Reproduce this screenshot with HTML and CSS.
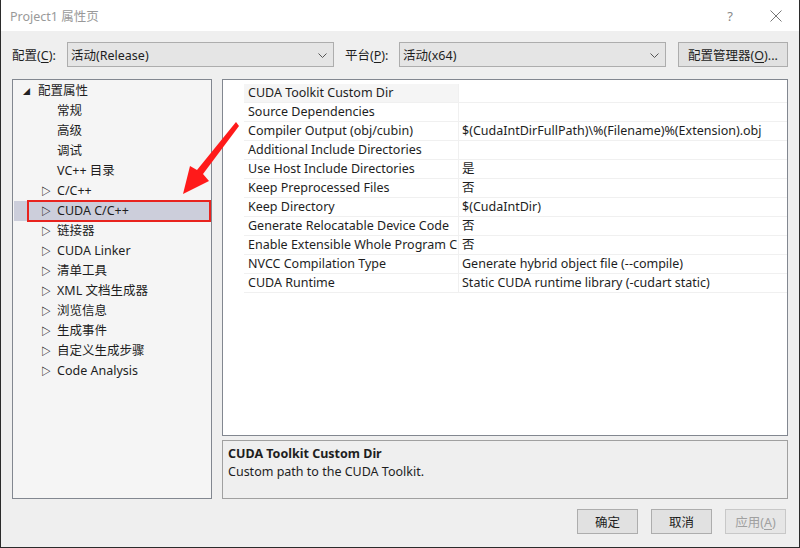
FILE: index.html
```html
<!DOCTYPE html>
<html>
<head>
    <title>Project1 属性页</title>
    <link rel="stylesheet" href="styles.css">
</head>
<body>
<div class="window">
    <div class="titlebar">
        <span class="title">Project1 属性页</span>
        <span class="tb-btn help">?</span>
        <span class="tb-btn close">
            <svg width="12" height="12" viewBox="0 0 12 12"><path d="M0.5 0.5L11.5 11.5M11.5 0.5L0.5 11.5" stroke="#777" stroke-width="1" fill="none"/></svg>
        </span>
    </div>

    <div class="content">
        <div class="toolbar">
            <label class="tlabel">配置(<u>C</u>):</label>
            <div class="select sel-config">
                <span>活动(Release)</span>
                <svg class="chev" width="9" height="5" viewBox="0 0 9 5"><path d="M0.5 0.5L4.5 4.5L8.5 0.5" stroke="#555" fill="none"/></svg>
            </div>
            <label class="tlabel plat">平台(<u>P</u>):</label>
            <div class="select sel-platform">
                <span>活动(x64)</span>
                <svg class="chev" width="9" height="5" viewBox="0 0 9 5"><path d="M0.5 0.5L4.5 4.5L8.5 0.5" stroke="#555" fill="none"/></svg>
            </div>
            <button class="btn mgr">配置管理器(<u>O</u>)...</button>
        </div>

        <div class="main">
            <div class="tree">
                <div class="node root"><span class="exp">&#9698;</span>配置属性</div>
                <div class="node leaf">常规</div>
                <div class="node leaf">高级</div>
                <div class="node leaf">调试</div>
                <div class="node leaf">VC++ 目录</div>
                <div class="node"><span class="tri">&#9655;</span>C/C++</div>
                <div class="node selected"><span class="tri">&#9655;</span>CUDA C/C++<span class="mark"></span></div>
                <div class="node"><span class="tri">&#9655;</span>链接器</div>
                <div class="node"><span class="tri">&#9655;</span>CUDA Linker</div>
                <div class="node"><span class="tri">&#9655;</span>清单工具</div>
                <div class="node"><span class="tri">&#9655;</span>XML 文档生成器</div>
                <div class="node"><span class="tri">&#9655;</span>浏览信息</div>
                <div class="node"><span class="tri">&#9655;</span>生成事件</div>
                <div class="node"><span class="tri">&#9655;</span>自定义生成步骤</div>
                <div class="node"><span class="tri">&#9655;</span>Code Analysis</div>
            </div>

            <div class="right">
                <div class="grid">
                    <div class="row current"><div class="name">CUDA Toolkit Custom Dir</div><div class="value"></div></div>
                    <div class="row"><div class="name">Source Dependencies</div><div class="value"></div></div>
                    <div class="row"><div class="name">Compiler Output (obj/cubin)</div><div class="value">$(CudaIntDirFullPath)\%(Filename)%(Extension).obj</div></div>
                    <div class="row"><div class="name">Additional Include Directories</div><div class="value"></div></div>
                    <div class="row"><div class="name">Use Host Include Directories</div><div class="value">是</div></div>
                    <div class="row"><div class="name">Keep Preprocessed Files</div><div class="value">否</div></div>
                    <div class="row"><div class="name">Keep Directory</div><div class="value">$(CudaIntDir)</div></div>
                    <div class="row"><div class="name">Generate Relocatable Device Code</div><div class="value">否</div></div>
                    <div class="row"><div class="name">Enable Extensible Whole Program C</div><div class="value">否</div></div>
                    <div class="row"><div class="name">NVCC Compilation Type</div><div class="value">Generate hybrid object file (--compile)</div></div>
                    <div class="row"><div class="name">CUDA Runtime</div><div class="value">Static CUDA runtime library (-cudart static)</div></div>
                </div>
                <div class="desc">
                    <div class="desc-title">CUDA Toolkit Custom Dir</div>
                    <div class="desc-text">Custom path to the CUDA Toolkit.</div>
                </div>
            </div>
        </div>

        <div class="footer">
            <button class="btn">确定</button>
            <button class="btn">取消</button>
            <button class="btn disabled">应用(<u>A</u>)</button>
        </div>
    </div>

    <!-- annotation arrow drawn over the dialog -->
    <svg class="arrow" width="800" height="548" viewBox="0 0 800 548">
        <polygon points="236,122 239,126 203,174 209,181 183,194 190,166 197,170" fill="#ff1a1a"/>
    </svg>
</div>
</body>
</html>
```

FILE: styles.css
```css
* { box-sizing: border-box; }
body { margin: 0; font-family: "Noto Sans", "Noto Sans CJK SC", sans-serif; font-size: 12.5px; color: #1e1e1e; }
u { text-decoration: underline; text-underline-offset: 2px; }

.window { position: relative; width: 800px; height: 548px; background: #efefef; border: 1px solid #2b2b2b; border-top: none; overflow: hidden; }

.titlebar { height: 31px; background: #fff; display: flex; align-items: center; padding-left: 9px; }
.title { flex: 1; color: #999; font-size: 12.5px; }
.tb-btn { width: 46px; text-align: center; color: #888; }
.help { font-size: 13px; }
.close { display: flex; justify-content: center; }

.content { padding: 11px 11px 0 11px; }

.toolbar { display: flex; align-items: center; height: 25px; }
.tlabel { width: 55px; }
.plat { margin-left: 11px; width: 54px; }
.select { display: flex; align-items: center; justify-content: space-between; height: 25px; background: #e5e5e5; border: 1px solid #adadad; padding: 0 6px 0 3px; }
.sel-config { width: 267px; }
.sel-platform { width: 267px; }
.chev { margin-top: 1px; }
.btn { font: inherit; color: #1e1e1e; background: #e1e1e1; border: 1px solid #adadad; height: 25px; padding: 0; }
.mgr { margin-left: 12px; width: 110px; }

.main { display: flex; margin-top: 12px; height: 420px; }
.tree { width: 200px; height: 420px; background: #f5f5f5; border: 1px solid #828790; padding-top: 1px; }
.node { position: relative; height: 20px; line-height: 20px; padding-left: 44px; white-space: nowrap; }
.node.root { padding-left: 25px; }
.node .tri { position: absolute; left: 28px; top: 0; font-size: 10px; color: #111; font-weight: bold; }
.node .exp { position: absolute; left: 10px; top: 1px; font-size: 7px; color: #222; }
.node.selected { background: #cccedb; margin-left: 1px; padding-left: 43px; }
.node.selected .tri { left: 27px; }
.mark { position: absolute; left: 13px; right: 0; top: -1px; bottom: -1px; border: 2px solid #e8231e; }

.right { margin-left: 10px; width: 566px; display: flex; flex-direction: column; }
.grid { height: 358px; background: #fff; border: 1px solid #828790; padding: 4px 0 0 21px; }
.row { display: flex; height: 19px; line-height: 18px; border-bottom: 1px solid #f0f0f0; }
.name { width: 215px; padding-left: 4px; border-right: 1px solid #f0f0f0; white-space: nowrap; overflow: hidden; }
.row.current .name { background: #f5f5f5; }
.value { flex: 1; padding-left: 3px; white-space: nowrap; }

.desc { margin-top: 4px; height: 59px; border: 1px solid #a0a0a0; background: #efefef; padding: 4px 5px 0; }
.desc-title { font-weight: bold; line-height: 18px; }
.desc-text { line-height: 18px; }

.footer { display: flex; justify-content: flex-end; gap: 13px; margin-top: 10px; padding-right: 2px; }
.footer .btn { width: 61px; height: 25px; }
.btn.disabled { color: #a0a0a0; background: #e6e6e6; border-color: #c8c8c8; }

.arrow { position: absolute; left: -1px; top: 0; pointer-events: none; }
```
